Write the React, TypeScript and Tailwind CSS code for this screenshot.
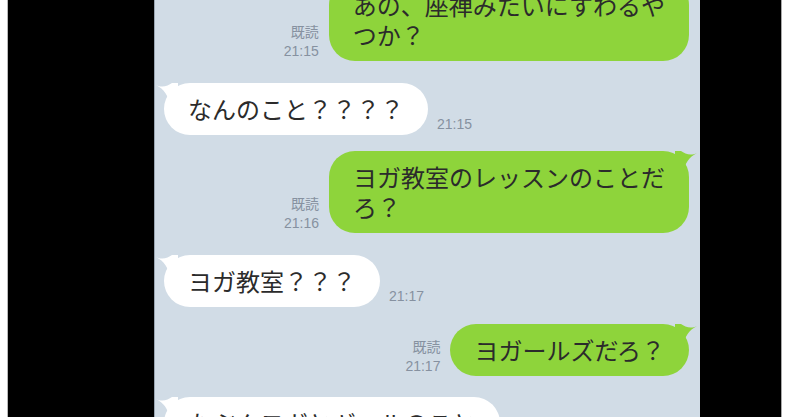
import type { ReactNode } from "react"

const jp = "font-[family-name:'Noto_Sans_CJK_JP',sans-serif]"
const meta = "font-[family-name:'Liberation_Sans','Noto_Sans_CJK_JP',sans-serif]"

function LeftTail() {
  return (
    <svg className="absolute left-[-8px] top-0" width="22" height="22" viewBox="0 0 22 22">
      <path d="M0 2 C6 5 12 3 16 0 L22 0 L22 22 L13 22 C13 13 8 6 0 2 Z" fill="#ffffff" />
    </svg>
  )
}

function RightTail() {
  return (
    <svg className="absolute right-[-8px] top-0" width="22" height="22" viewBox="0 0 22 22">
      <path d="M22 2 C16 5 10 3 6 0 L0 0 L0 22 L9 22 C9 13 14 6 22 2 Z" fill="#8ed43b" />
    </svg>
  )
}

function Incoming({ children, time, className = "" }: { children: ReactNode; time?: string; className?: string }) {
  return (
    <div className={`flex items-end gap-[9px] pl-[9px] ${className}`}>
      <div className={`relative rounded-[26px] bg-white px-[24px] py-[11px] text-[24px] leading-[30px] text-[#2b2b2b] ${jp}`}>
        <LeftTail />
        <span className="relative">{children}</span>
      </div>
      {time && <span className={`mb-[1px] text-[14px] leading-[19px] text-[#8691a0] ${meta}`}>{time}</span>}
    </div>
  )
}

function Outgoing({ children, time, className = "" }: { children: ReactNode; time: string; className?: string }) {
  return (
    <div className={`flex items-end justify-end gap-[10px] pr-[11px] ${className}`}>
      <div className={`flex flex-col items-end text-[14px] leading-[19px] text-[#8691a0] ${meta}`}>
        <span>既読</span>
        <span>{time}</span>
      </div>
      <div className={`relative rounded-[26px] bg-[#8ed43b] px-[24px] py-[11px] text-[24px] leading-[30px] text-[#2b2b2b] ${jp}`}>
        <RightTail />
        <span className="relative">{children}</span>
      </div>
    </div>
  )
}

export default function App() {
  return (
    <div className="flex h-[417px] w-[800px] overflow-hidden bg-white">
      <div className="w-[8px] shrink-0 border-r border-[#b9b9b9] bg-white" />
      <div className="w-[146px] shrink-0 bg-black" />
      <div className="w-[546px] shrink-0 overflow-hidden border-l border-[#9aa6b2] bg-[#d1dce6]">
        <div className="mt-[-21px] flex flex-col">
          <Outgoing time="21:15">
            あの、座禅みたいにすわるや
            <br />
            つか？
          </Outgoing>
          <Incoming time="21:15" className="mt-[22px]">
            なんのこと？？？？
          </Incoming>
          <Outgoing time="21:16" className="mt-[16px]">
            ヨガ教室のレッスンのことだ
            <br />
            ろ？
          </Outgoing>
          <Incoming time="21:17" className="mt-[22px]">
            ヨガ教室？？？
          </Incoming>
          <Outgoing time="21:17" className="mt-[17px]">
            ヨガールズだろ？
          </Outgoing>
          <Incoming className="mt-[21px]">たぶんヨガとギャルのこと</Incoming>
        </div>
      </div>
      <div className="w-[82px] shrink-0 border-r border-[#a8a8a8] bg-black" />
      <div className="flex-1 bg-white" />
    </div>
  )
}
